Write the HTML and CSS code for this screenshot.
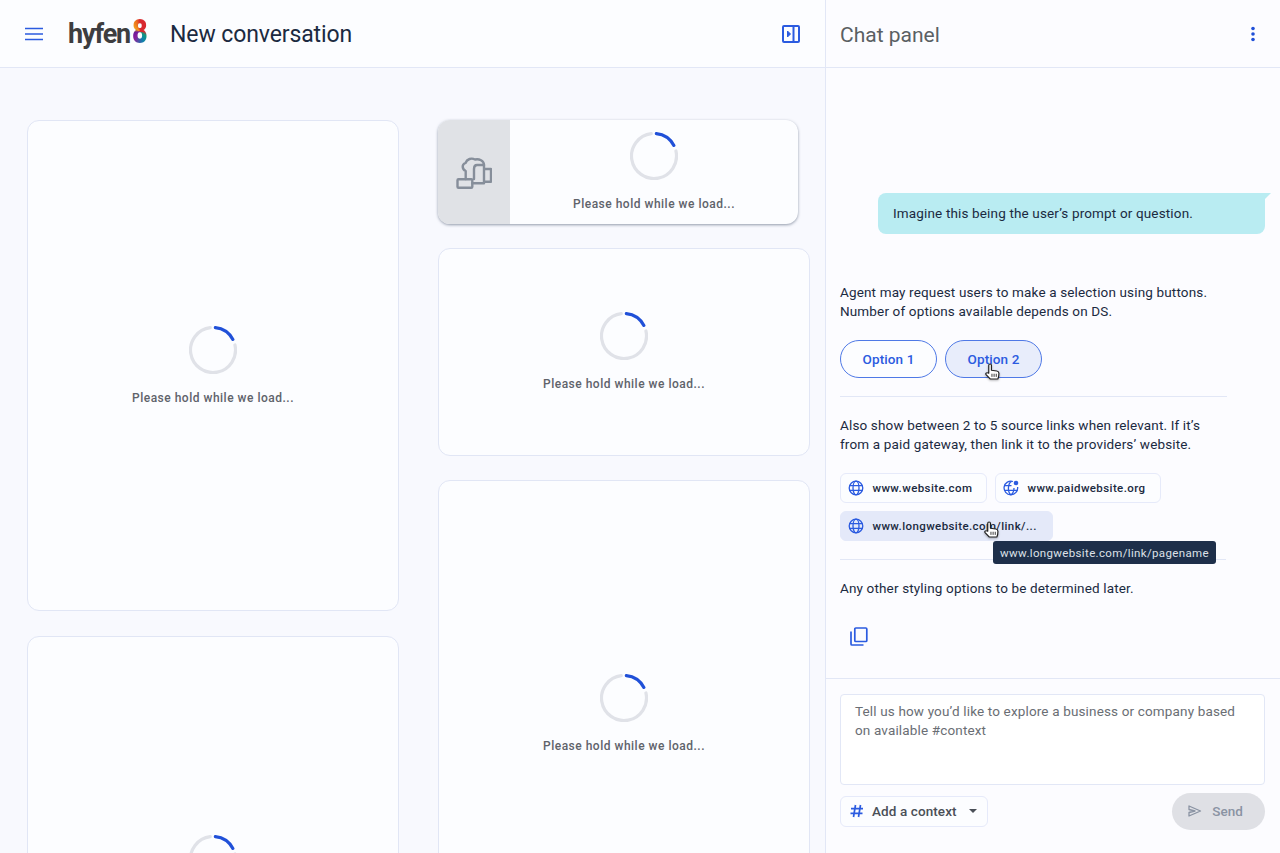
FILE: index.html
```html
<!DOCTYPE html>
<html lang="en">
<head>
<meta charset="utf-8">
<title>New conversation</title>
<link rel="stylesheet" href="styles.css">
</head>
<body>
<div class="app">
  <main class="main">
    <header class="main-head">
      <svg class="menu-icon" viewBox="0 0 18 14" width="18" height="14"><path d="M0 1.500h18M0 7h18M0 12.500h18" stroke="#2b5be0" stroke-width="1.700" fill="none"/></svg>
      <div class="logo"><span class="logo-word">hyfen</span><span class="logo-eight">8</span></div>
      <h1 class="title">New conversation</h1>
      <svg class="dock-icon" viewBox="0 0 18 18" width="18" height="18" fill="none" stroke="#2b5be0" stroke-width="2"><rect x="1" y="1" width="16" height="16" rx="1"/><path d="M11.500 1v16"/><path d="M5.500 6 8.500 9l-3 3z" fill="#2b5be0" stroke-width="1"/></svg>
    </header>
    <div class="board">
      <div class="col">
        <section class="card h-tall"><div class="loader"><svg class="spin" viewBox="0 0 48 48"><path d="M45.920 18.940A22.500 22.500 0 1 1 21.260 1.670" class="track"/><path d="M26.350 1.620A22.500 22.500 0 0 1 43.870 13.440" class="arc"/></svg><p class="load-text">Please hold while we load...</p></div></section>
        <section class="card h-tall2"><div class="loader loader-cut"><svg class="spin" viewBox="0 0 48 48"><path d="M45.920 18.940A22.500 22.500 0 1 1 21.260 1.670" class="track"/><path d="M26.350 1.620A22.500 22.500 0 0 1 43.870 13.440" class="arc"/></svg></div></section>
      </div>
      <div class="col">
        <section class="card card-row">
          <div class="thumb">
            <svg viewBox="0 0 36 36" width="36" height="36" fill="none" stroke="#868e9a" stroke-width="2.400" stroke-linejoin="round" stroke-linecap="round"><path d="M9.700 25V17C6 15 5.500 10.500 9.500 9 11 5 15.500 3.500 19 5.500 23 4.500 28 6.500 28 11H21C19 11 18 12.500 18 15V25"/><path d="M28 11V29.300H16.300M28 15H35V27.700H28"/><rect x="1.500" y="25.300" width="14.800" height="8.500" rx="1"/></svg>
          </div>
          <div class="loader row-loader"><svg class="spin" viewBox="0 0 48 48"><path d="M45.920 18.940A22.500 22.500 0 1 1 21.260 1.670" class="track"/><path d="M26.350 1.620A22.500 22.500 0 0 1 43.870 13.440" class="arc"/></svg><p class="load-text">Please hold while we load...</p></div>
        </section>
        <section class="card h-mid"><div class="loader"><svg class="spin" viewBox="0 0 48 48"><path d="M45.920 18.940A22.500 22.500 0 1 1 21.260 1.670" class="track"/><path d="M26.350 1.620A22.500 22.500 0 0 1 43.870 13.440" class="arc"/></svg><p class="load-text">Please hold while we load...</p></div></section>
        <section class="card h-long"><div class="loader"><svg class="spin" viewBox="0 0 48 48"><path d="M45.920 18.940A22.500 22.500 0 1 1 21.260 1.670" class="track"/><path d="M26.350 1.620A22.500 22.500 0 0 1 43.870 13.440" class="arc"/></svg><p class="load-text">Please hold while we load...</p></div></section>
      </div>
    </div>
  </main>
  <aside class="panel">
    <header class="panel-head">
      <h2 class="panel-title">Chat panel</h2>
      <svg class="dots" viewBox="0 0 4 16" width="4" height="16" fill="#2050d8"><circle cx="2" cy="2.500" r="1.800"/><circle cx="2" cy="8" r="1.800"/><circle cx="2" cy="13.500" r="1.800"/></svg>
    </header>
    <div class="chat">
      <div class="bubble">Imagine this being the user’s prompt or question.<span class="tail"></span></div>
      <p class="msg msg-first">Agent may request users to make a selection using buttons.<br>Number of options available depends on DS.</p>
      <div class="options">
        <button class="opt">Option 1</button>
        <button class="opt opt-hover">Option 2<svg class="hand" viewBox="1 0 14 19" width="15" height="17" preserveAspectRatio="none"><path d="M4.500 11V2.600c0-2 2.500-2 2.500 0V8l5 1c1.500.3 2 1 2 2.500 0 2 0 4-1 6.500H6l-4-5c-1-1.500.8-2.800 2.500-1.500z" fill="#fff" stroke="#222" stroke-width="1.100" stroke-linejoin="round"/><path d="M7.500 12v3.500M9.500 12v3.500M11.500 12v3.500" stroke="#222" stroke-width=".9"/></svg></button>
      </div>
      <hr class="rule rule-a">
      <p class="msg">Also show between 2 to 5 source links when relevant. If it’s<br>from a paid gateway, then link it to the providers’ website.</p>
      <div class="links">
        <a class="link link-1"><svg class="globe" viewBox="0 0 16 16" width="16" height="16" fill="none" stroke="#2b5be0" stroke-width="1.300"><circle cx="8" cy="8" r="6.800"/><ellipse cx="8" cy="8" rx="3" ry="6.800"/><path d="M1.500 5.700h13M1.500 10.300h13"/></svg><span>www.website.com</span></a>
        <a class="link link-2"><svg class="globe" viewBox="0 0 16 16" width="16" height="16" fill="none" stroke="#2b5be0" stroke-width="1.300"><path d="M10 1.500A6.800 6.800 0 1 0 14.600 7"/><path d="M8.500 1.300C5 3 4 12 8 14.800c2-1.400 3-3.800 3-6.800"/><path d="M1.500 5.700h7M1.500 10.300h13"/><circle cx="13" cy="3" r="2.300" fill="#2b5be0" stroke="none"/></svg><span>www.paidwebsite.org</span></a>
        <a class="link link-3"><svg class="globe" viewBox="0 0 16 16" width="16" height="16" fill="none" stroke="#2b5be0" stroke-width="1.300"><circle cx="8" cy="8" r="6.800"/><ellipse cx="8" cy="8" rx="3" ry="6.800"/><path d="M1.500 5.700h13M1.500 10.300h13"/></svg><span>www.longwebsite.com/link/...</span><svg class="hand hand-link" viewBox="1 0 14 19" width="15" height="17" preserveAspectRatio="none"><path d="M4.500 11V2.600c0-2 2.500-2 2.500 0V8l5 1c1.500.3 2 1 2 2.500 0 2 0 4-1 6.500H6l-4-5c-1-1.500.8-2.800 2.500-1.500z" fill="#fff" stroke="#222" stroke-width="1.100" stroke-linejoin="round"/><path d="M7.500 12v3.500M9.500 12v3.500M11.500 12v3.500" stroke="#222" stroke-width=".9"/></svg><span class="tooltip">www.longwebsite.com/link/pagename</span></a>
      </div>
      <hr class="rule rule-b">
      <p class="msg">Any other styling options to be determined later.</p>
      <svg class="copy" viewBox="0 0 18 19" width="18" height="19" fill="none" stroke="#2b5be0" stroke-width="1.700"><rect x="4.800" y="1" width="12" height="13.500" rx="1"/><path d="M1 4.500V17a1 1 0 0 0 1 1h11.500"/></svg>
    </div>
    <footer class="composer">
      <div class="input">Tell us how you’d like to explore a business or company based on available #context</div>
      <div class="actions">
        <button class="context"><svg class="hash" viewBox="0 0 14 14" width="14" height="14" fill="none" stroke="#2b5be0" stroke-width="1.700"><path d="M5.500 1 3.500 13M10.500 1 8.500 13M1 4.700h12M.5 9.300h12"/></svg><span class="context-label">Add a context</span><span class="caret"></span></button>
        <button class="send"><svg viewBox="0 0 14 12" width="14" height="12" fill="none" stroke="#8a93a3" stroke-width="1.300" stroke-linejoin="round"><path d="M1 1l11.500 5L1 11V7.500L7 6 1 4.500z"/></svg><span>Send</span></button>
      </div>
    </footer>
  </aside>
</div>
</body>
</html>
```
FILE: styles.css
```css
* { box-sizing: border-box; }
html, body { margin: 0; padding: 0; height: 100%; overflow: hidden; }
body { font-family: Roboto, "Liberation Sans", sans-serif; color: #1b2a41; background: #f8f9fe; }
h1, h2, p { margin: 0; font-weight: 400; }
button { font-family: inherit; cursor: pointer; }

.app { display: flex; width: 1280px; height: 853px; overflow: hidden; }

.main { width: 826px; flex: none; border-right: 1px solid #e2e7f6; background: #f8f9fe; overflow: hidden; }
.main-head { height: 68px; display: flex; align-items: center; padding: 0 25px; background: #fcfdff; border-bottom: 1px solid #e2e7f6; }
.menu-icon { flex: none; }
.logo { margin-left: 25px; display: flex; align-items: flex-start; font-family: Roboto, sans-serif; font-weight: 700; width: 80px; height: 36px; }
.logo-word { font-size: 27px; line-height: 37px; letter-spacing: -1.200px; color: #3d3d3f; }
.logo-eight { font-size: 33px; line-height: 31px; margin-left: 2px; font-weight: 900; transform: scaleX(.82); transform-origin: left top; background: conic-gradient(from 0deg at 50% 50%, #d8282f 0deg, #d8282f 90deg, #0e9a80 120deg, #0f7fae 160deg, #8a1f9c 220deg, #6a1b9a 260deg, #f2a01e 300deg, #ec6b1e 340deg, #d8282f 360deg); -webkit-background-clip: text; background-clip: text; color: transparent; }
.title { margin-left: 22px; padding-top: 3px; font-size: 23px; letter-spacing: -.1px; line-height: 32px; color: #1b2a41; }
.dock-icon { margin-left: auto; }

.board { display: flex; gap: 39px; padding: 52px 0 0 27px; }
.col { width: 372px; flex: none; display: flex; flex-direction: column; gap: 24px; }
.card { flex: none; background: #fcfdff; border: 1px solid #e1e6f5; border-radius: 12px; display: flex; align-items: center; justify-content: center; }
.h-tall { height: 491px; margin-bottom: 1px; }
.h-tall2 { height: 478px; }
.h-mid { height: 208px; }
.h-long { height: 467px; }
.card-row { width: 360px; height: 104px; border: none; overflow: hidden; justify-content: flex-start; align-items: stretch; box-shadow: 0 1px 3px rgba(60, 75, 100, .55); }
.thumb { width: 72px; flex: none; background: #e0e2e6; display: flex; align-items: center; justify-content: center; }
.loader { display: flex; flex-direction: column; align-items: center; }
.loader-cut { padding-bottom: 32px; }
.row-loader { flex: 1; padding-top: 12px; }
.spin { width: 48px; height: 48px; display: block; fill: none; stroke-width: 3.200; stroke-linecap: round; }
.track { stroke: #e0e2e8; }
.arc { stroke: #2050d8; }
.load-text { margin-top: 16px; font-size: 12px; line-height: 16px; font-weight: 500; letter-spacing: .5px; color: #5f636b; }

.panel { flex: 1; display: flex; flex-direction: column; background: #fcfcff; min-width: 0; }
.panel-head { height: 68px; flex: none; display: flex; align-items: center; justify-content: space-between; padding: 0 25px 0 14px; border-bottom: 1px solid #e2e7f6; }
.panel-title { padding-top: 2px; font-size: 21px; line-height: 32px; color: #5a5f63; }
.dots { margin-top: 1px; }
.chat { flex: 1; padding: 125px 15px 0 14px; min-height: 0; }
.bubble { position: relative; margin-left: 38px; height: 41px; padding: 0 15px 2px; display: flex; align-items: center; background: #b9ecf2; border-radius: 8px 0 8px 8px; font-size: 13.500px; letter-spacing: .15px; color: #1b2a41; }
.tail { position: absolute; top: 0; right: -6px; width: 7px; height: 7px; background: #b9ecf2; clip-path: polygon(0 0, 100% 0, 0 100%); }
.msg { font-size: 13.500px; line-height: 19px; letter-spacing: .15px; color: #1b2a41; }
.msg-first { margin-top: 49px; }
.options { display: flex; gap: 8px; margin-top: 19px; }
.opt { position: relative; height: 38px; width: 97px; padding: 0; border: 1px solid #4f79e6; border-radius: 19px; background: #fcfdff; color: #2b5be0; font-size: 13.500px; font-weight: 500; letter-spacing: .1px; }
.opt-hover { background: #e8edfb; }
.hand { position: absolute; left: 39px; top: 22px; filter: drop-shadow(0 1px 1px rgba(0, 0, 0, .3)); }
.rule { border: 0; border-top: 1px solid #e2e7f6; margin: 0; width: 387px; }
.rule-a { margin-top: 18px; margin-bottom: 19px; }
.rule-b { margin-top: 18px; margin-bottom: 19px; width: 386px; }
.links { display: flex; flex-wrap: wrap; gap: 8px; margin-top: 19px; width: 387px; }
.link { position: relative; height: 30px; display: flex; align-items: center; padding: 0 7px; border: 1px solid #e6eafa; border-radius: 6px; font-size: 11.500px; font-weight: 500; letter-spacing: .4px; color: #1b2a41; background: #fcfdff; }
.link-1 { width: 147px; }
.link-2 { width: 166px; }
.link-3 { width: 213px; background: #e4e9f9; border-color: #e4e9f9; }
.globe { flex: none; margin-right: 8.500px; }
.hand-link { left: 143px; top: 9px; }
.tooltip { position: absolute; left: 152px; top: 29px; width: 223px; height: 23px; display: flex; align-items: center; justify-content: center; background: #1e2f4a; color: #dde1e8; border-radius: 3px; font-size: 11.500px; font-weight: 400; letter-spacing: .35px; white-space: nowrap; z-index: 2; }
.copy { display: block; margin: 29px 0 0 10px; }

.composer { height: 175px; flex: none; padding: 15px 15px 0 14px; border-top: 1px solid #e2e7f6; }
.input { height: 91px; padding: 7px 14px; background: #fff; border: 1px solid #e2e7f6; border-radius: 4px; font-size: 13.500px; line-height: 19px; letter-spacing: .15px; color: #6a6e74; }
.actions { display: flex; align-items: center; justify-content: space-between; margin-top: 8px; }
.context { width: 148px; height: 31px; display: flex; align-items: center; padding: 0 9px 1px; background: #fcfdff; border: 1px solid #e6eafa; border-radius: 6px; font-size: 13.500px; font-weight: 500; color: #4a4f57; letter-spacing: .1px; white-space: nowrap; }
.hash { flex: none; margin-right: 8px; }
.caret { margin-left: 12px; width: 0; height: 0; border-left: 4px solid transparent; border-right: 4px solid transparent; border-top: 4px solid #4a4f57; }
.send { width: 93px; height: 37px; padding: 0 6px 1px 0; display: flex; align-items: center; justify-content: center; gap: 10px; background: #dfe0e5; border: 0; border-radius: 19px; font-size: 13.500px; font-weight: 500; color: #8a93a3; }
```
